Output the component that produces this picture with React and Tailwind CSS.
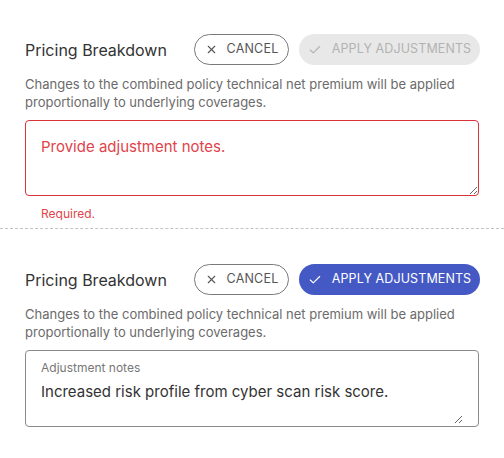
import { Check, X } from 'lucide-react';

function Header({ applyEnabled }) {
  return (
    <div className="flex items-center">
      <h2 className="w-[169px] shrink-0 text-[16px] text-[#333333] leading-6">Pricing Breakdown</h2>
      <div className="flex items-center gap-[10px] shrink-0">
        <button className="shrink-0 h-[31px] w-[95px] rounded-full border border-[#7a7a7a] flex items-center justify-center gap-[9px] text-[12.5px] tracking-[0.2px] text-[#555555]">
          <X size={13} strokeWidth={2} />
          CANCEL
        </button>
        <button
          className={`shrink-0 h-[31px] w-[181px] rounded-full flex items-center justify-center gap-[10px] text-[12.5px] tracking-[0.1px] ${
            applyEnabled ? 'bg-[#4559c5] text-white' : 'bg-[#e8e8e8] text-[#b3b3b3]'
          }`}
        >
          <Check size={14} strokeWidth={2} />
          APPLY ADJUSTMENTS
        </button>
      </div>
    </div>
  );
}

function Description() {
  return (
    <p className="mt-[10px] text-[13px] leading-[18px] text-[#6b6b6b]">
      Changes to the combined policy technical net premium will be applied proportionally to underlying coverages.
    </p>
  );
}

export default function App() {
  return (
    <div className="min-h-screen bg-white" style={{ fontFamily: 'Inter, "Noto Sans", sans-serif' }}>
      {/* Error state */}
      <section className="px-[25px] pt-[34px] pb-[6px]">
        <Header applyEnabled={false} />
        <Description />
        <textarea
          className="mt-[9px] block w-full h-[76px] rounded-[4px] border border-[#d9343a] px-[15px] pt-[14px] text-[15px] leading-[23px] text-[#333] placeholder:text-[#e0434a] outline-none"
          placeholder="Provide adjustment notes."
        />
        <p className="mt-[10px] px-[16px] text-[12px] leading-4 text-[#e0434a]">Required.</p>
      </section>

      <div className="border-t border-dashed border-[#c4c4c4]" />

      {/* Filled state */}
      <section className="px-[25px] pt-[35px] pb-[24px]">
        <Header applyEnabled />
        <Description />
        <div className="mt-[9px] rounded-[4px] border border-[#8a8a8a] h-[77px] px-[15px] pt-[9px]">
          <label className="block text-[12px] leading-4 text-[#777777]">Adjustment notes</label>
          <textarea
            className="mt-[4px] block w-full h-[44px] resize-y text-[15px] leading-[23px] text-[#333] outline-none"
            defaultValue="Increased risk profile from cyber scan risk score."
          />
        </div>
      </section>
    </div>
  );
}
